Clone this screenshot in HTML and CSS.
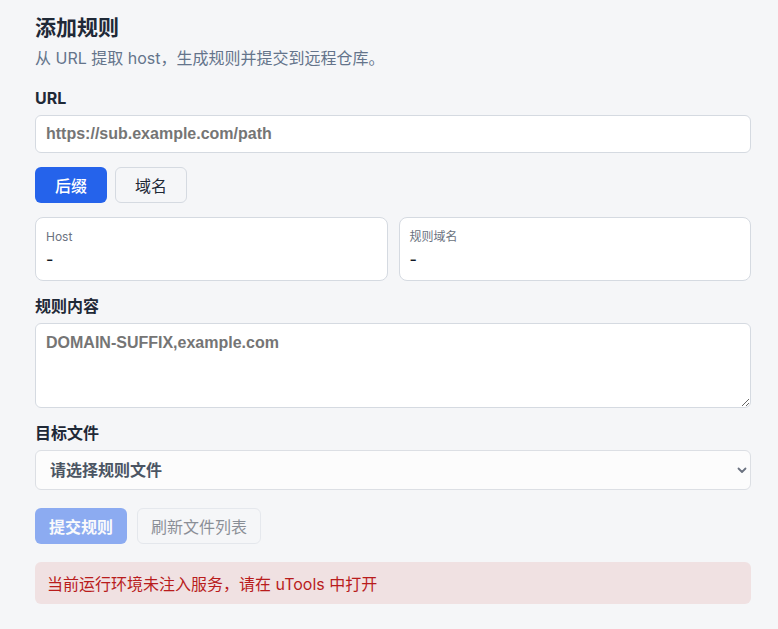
FILE: index.html
```html
<!DOCTYPE html>
<html lang="zh-CN">
<head>
  <meta charset="UTF-8" />
  <meta name="viewport" content="width=device-width, initial-scale=1.0" />
  <title>添加规则</title>
  <link rel="stylesheet" href="styles.css">
</head>
<body>
  <div class="page">
    <!-- 标题 -->
    <header class="head">
      <h1>添加规则</h1>
      <p class="sub">从 URL 提取 host，生成规则并提交到远程仓库。</p>
    </header>

    <div class="form">
      <div class="field">
        <label for="urlInput">URL</label>
        <input id="urlInput" type="text" placeholder="https://sub.example.com/path" />
      </div>

      <div class="mode-toggle">
        <button class="btn primary">后缀</button>
        <button class="btn ghost">域名</button>
      </div>

      <div class="info-grid">
        <div class="info-card">
          <div class="info-label">Host</div>
          <div class="info-value">-</div>
        </div>
        <div class="info-card">
          <div class="info-label">规则域名</div>
          <div class="info-value">-</div>
        </div>
      </div>

      <div class="field">
        <label for="ruleInput">规则内容</label>
        <textarea id="ruleInput" placeholder="DOMAIN-SUFFIX,example.com"></textarea>
      </div>

      <div class="field">
        <label for="fileSelect">目标文件</label>
        <div class="select-wrap">
          <select id="fileSelect">
            <option>请选择规则文件</option>
          </select>
          <svg class="chevron" width="12" height="12" viewBox="0 0 12 12"><path d="M2.5 4.5 6 8l3.5-3.5" fill="none" stroke="#6b7280" stroke-width="1.8" stroke-linecap="round" stroke-linejoin="round"/></svg>
        </div>
      </div>

      <div class="actions">
        <button class="btn primary" disabled>提交规则</button>
        <button class="btn ghost" disabled>刷新文件列表</button>
      </div>

      <div class="alert">当前运行环境未注入服务，请在 uTools 中打开</div>
    </div>
  </div>
</body>
</html>
```

FILE: styles.css
```css
/* ===== base ===== */
*,*::before,*::after{box-sizing:border-box;margin:0;padding:0;}
body{font-family:Inter,"Noto Sans CJK SC",sans-serif;background:#f5f6f8;color:#1f2937;}
.page{padding:14px 27px 20px 35px;}

/* ===== header ===== */
h1{font-size:21px;font-weight:700;line-height:28px;color:#1f2937;}
.sub{margin-top:5px;font-size:16px;line-height:22px;color:#64748b;}

/* ===== form ===== */
.form{display:flex;flex-direction:column;gap:14px;margin-top:18px;}
.field{display:flex;flex-direction:column;gap:6px;}
.field label{font-size:16px;font-weight:700;line-height:22px;color:#1f2937;}
input[type="text"],textarea,select{width:100%;font-family:"Liberation Sans","Noto Sans CJK SC",sans-serif;font-size:16px;font-weight:700;color:#1f2937;background:#fff;border:1px solid #d5dae1;border-radius:6px;outline:none;}
input[type="text"]{height:38px;padding:0 10px;}
textarea{height:85px;padding:9px 10px;resize:vertical;line-height:20px;}
::placeholder{color:#757575;}
.select-wrap{position:relative;}
select{appearance:none;-webkit-appearance:none;height:40px;padding:0 30px 0 14px;background:#fcfcfc;color:#4b5563;font-family:Inter,"Noto Sans CJK SC",sans-serif;font-weight:600;border-color:#dcdfe4;}
.chevron{position:absolute;right:3px;top:14px;}

/* ===== buttons ===== */
.btn{height:36px;padding:0 19px;font-family:Inter,"Noto Sans CJK SC",sans-serif;font-size:16px;border-radius:6px;cursor:pointer;border:1px solid transparent;}
.btn.primary{background:#2563eb;color:#fff;font-weight:500;}
.btn.ghost{background:transparent;border-color:#d5dae1;color:#1f2937;}
.btn:disabled{opacity:.5;cursor:not-allowed;}
.mode-toggle{display:flex;gap:8px;}
.actions{display:flex;gap:10px;margin-top:4px;}
.actions .btn{padding:0 13px;font-weight:600;}
.actions .btn.ghost{font-weight:400;}

/* ===== info cards ===== */
.info-grid{display:grid;grid-template-columns:1fr 1fr;gap:11px;}
.info-card{height:64px;padding:11px 10px;background:#fff;border:1px solid #d5dae1;border-radius:8px;}
.info-label{font-size:12px;line-height:16px;color:#6b7280;}
.info-value{margin-top:3px;font-size:16px;line-height:22px;font-weight:500;color:#111827;}

/* ===== alert ===== */
.alert{margin-top:4px;height:42px;display:flex;align-items:center;padding:0 12px;background:#f0e1e2;color:#b91c1c;font-size:16px;border-radius:6px;}
```
